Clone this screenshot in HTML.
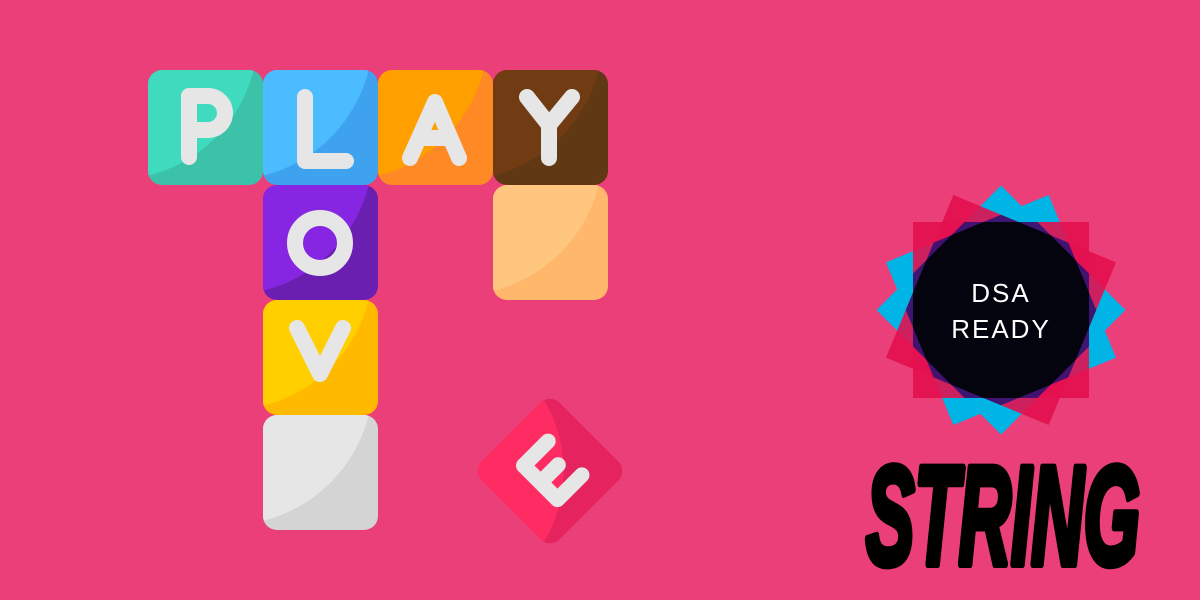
<!DOCTYPE html>
<html><head><meta charset="utf-8"><style>
html,body{margin:0;padding:0;overflow:hidden}
body{width:1200px;height:600px;background:#eb3f7a;overflow:hidden;position:relative;font-family:"Liberation Sans",sans-serif}
svg{position:absolute;left:0;top:0}
.badge{position:absolute;left:901px;top:275px;width:200px;text-align:center;color:#fff;font-size:26px;line-height:36px;letter-spacing:2px}
</style></head><body>
<svg width="1200" height="600" viewBox="0 0 1200 600">
<defs>
<clipPath id="t"><rect width="115" height="115" rx="14"/></clipPath>
<clipPath id="c0"><rect x="-88" y="-88" width="176" height="176"/></clipPath>
<clipPath id="c1"><rect x="-88" y="-88" width="176" height="176" transform="rotate(22.5)"/></clipPath>
<clipPath id="c2"><rect x="-88" y="-88" width="176" height="176" transform="rotate(45)"/></clipPath>
<clipPath id="c3"><rect x="-88" y="-88" width="176" height="176" transform="rotate(67.5)"/></clipPath>
</defs>
<g id="tiles" stroke-linecap="round" stroke-linejoin="round" fill="none">
<g transform="translate(148,70)" clip-path="url(#t)"><rect width="115" height="115" fill="#3bc2a8"/><circle cx="-35" cy="-35" r="145" fill="#40dbbf"/>
<path d="M41 87V26H60a17 17 0 0 1 0 34H41" stroke="#e6e6e6" stroke-width="16"/></g>
<g transform="translate(263,70)" clip-path="url(#t)"><rect width="115" height="115" fill="#3ea2ef"/><circle cx="-35" cy="-35" r="145" fill="#4bbcff"/>
<path d="M42 27V91H83" stroke="#e6e6e6" stroke-width="16"/></g>
<g transform="translate(378,70)" clip-path="url(#t)"><rect width="115" height="115" fill="#ff8924"/><circle cx="-35" cy="-35" r="145" fill="#ffa000"/>
<path d="M32 88L57 32L81 88M42 68H72" stroke="#e6e6e6" stroke-width="16"/></g>
<g transform="translate(493,70)" clip-path="url(#t)"><rect width="115" height="115" fill="#603813"/><circle cx="-35" cy="-35" r="145" fill="#713c14"/>
<path d="M34 27L56 55L79 27M56 55V88" stroke="#e6e6e6" stroke-width="16"/></g>
<g transform="translate(493,185)" clip-path="url(#t)"><rect width="115" height="115" fill="#ffb86b"/><circle cx="-35" cy="-35" r="145" fill="#ffc67f"/></g>
<g transform="translate(263,185)" clip-path="url(#t)"><rect width="115" height="115" fill="#6b1fb0"/><circle cx="-35" cy="-35" r="145" fill="#8626e2"/>
<circle cx="57" cy="58" r="25" stroke="#e6e6e6" stroke-width="16"/></g>
<g transform="translate(263,300)" clip-path="url(#t)"><rect width="115" height="115" fill="#ffba00"/><circle cx="-35" cy="-35" r="145" fill="#ffcf00"/>
<path d="M34 28L57 74L80 28" stroke="#e6e6e6" stroke-width="16"/></g>
<g transform="translate(263,415)" clip-path="url(#t)"><rect width="115" height="115" fill="#d4d4d4"/><circle cx="-35" cy="-35" r="145" fill="#e6e6e6"/></g>
<g transform="translate(550,471) rotate(-45) translate(-55,-55)"><g clip-path="url(#t)" transform="scale(0.957)"><rect width="115" height="115" fill="#e4235f"/><circle cx="-35" cy="-35" r="145" fill="#ff2c64"/>
<path d="M78 34H42V84H78M42 59H68" stroke="#e6e6e6" stroke-width="16"/></g></g>
</g>
<g transform="translate(1001,310)">
<rect x="-88" y="-88" width="176" height="176" fill="#00b4e6" transform="rotate(45)"/>
<rect x="-88" y="-88" width="176" height="176" fill="#00b4e6" transform="rotate(67.5)"/>
<rect x="-88" y="-88" width="176" height="176" fill="#e3104f" opacity="0.9"/>
<rect x="-88" y="-88" width="176" height="176" fill="#e3104f" opacity="0.9" transform="rotate(22.5)"/>
<g clip-path="url(#c0)"><g clip-path="url(#c2)"><rect x="-130" y="-130" width="260" height="260" fill="#00127a" opacity="0.7"/></g></g>
<g clip-path="url(#c1)"><g clip-path="url(#c3)"><rect x="-130" y="-130" width="260" height="260" fill="#00127a" opacity="0.7"/></g></g>
<g clip-path="url(#c0)"><g clip-path="url(#c1)"><g clip-path="url(#c2)"><g clip-path="url(#c3)"><rect x="-130" y="-130" width="260" height="260" fill="#04040f"/></g></g></g></g>
</g>
<text x="866" y="564" font-family="Liberation Sans, sans-serif" font-weight="bold" font-style="italic" font-size="140" textLength="274" lengthAdjust="spacingAndGlyphs" fill="#000" stroke="#000" stroke-width="8" stroke-linejoin="round">STRING</text>
</svg>
<div class="badge">DSA<br>READY</div>
</body></html>
